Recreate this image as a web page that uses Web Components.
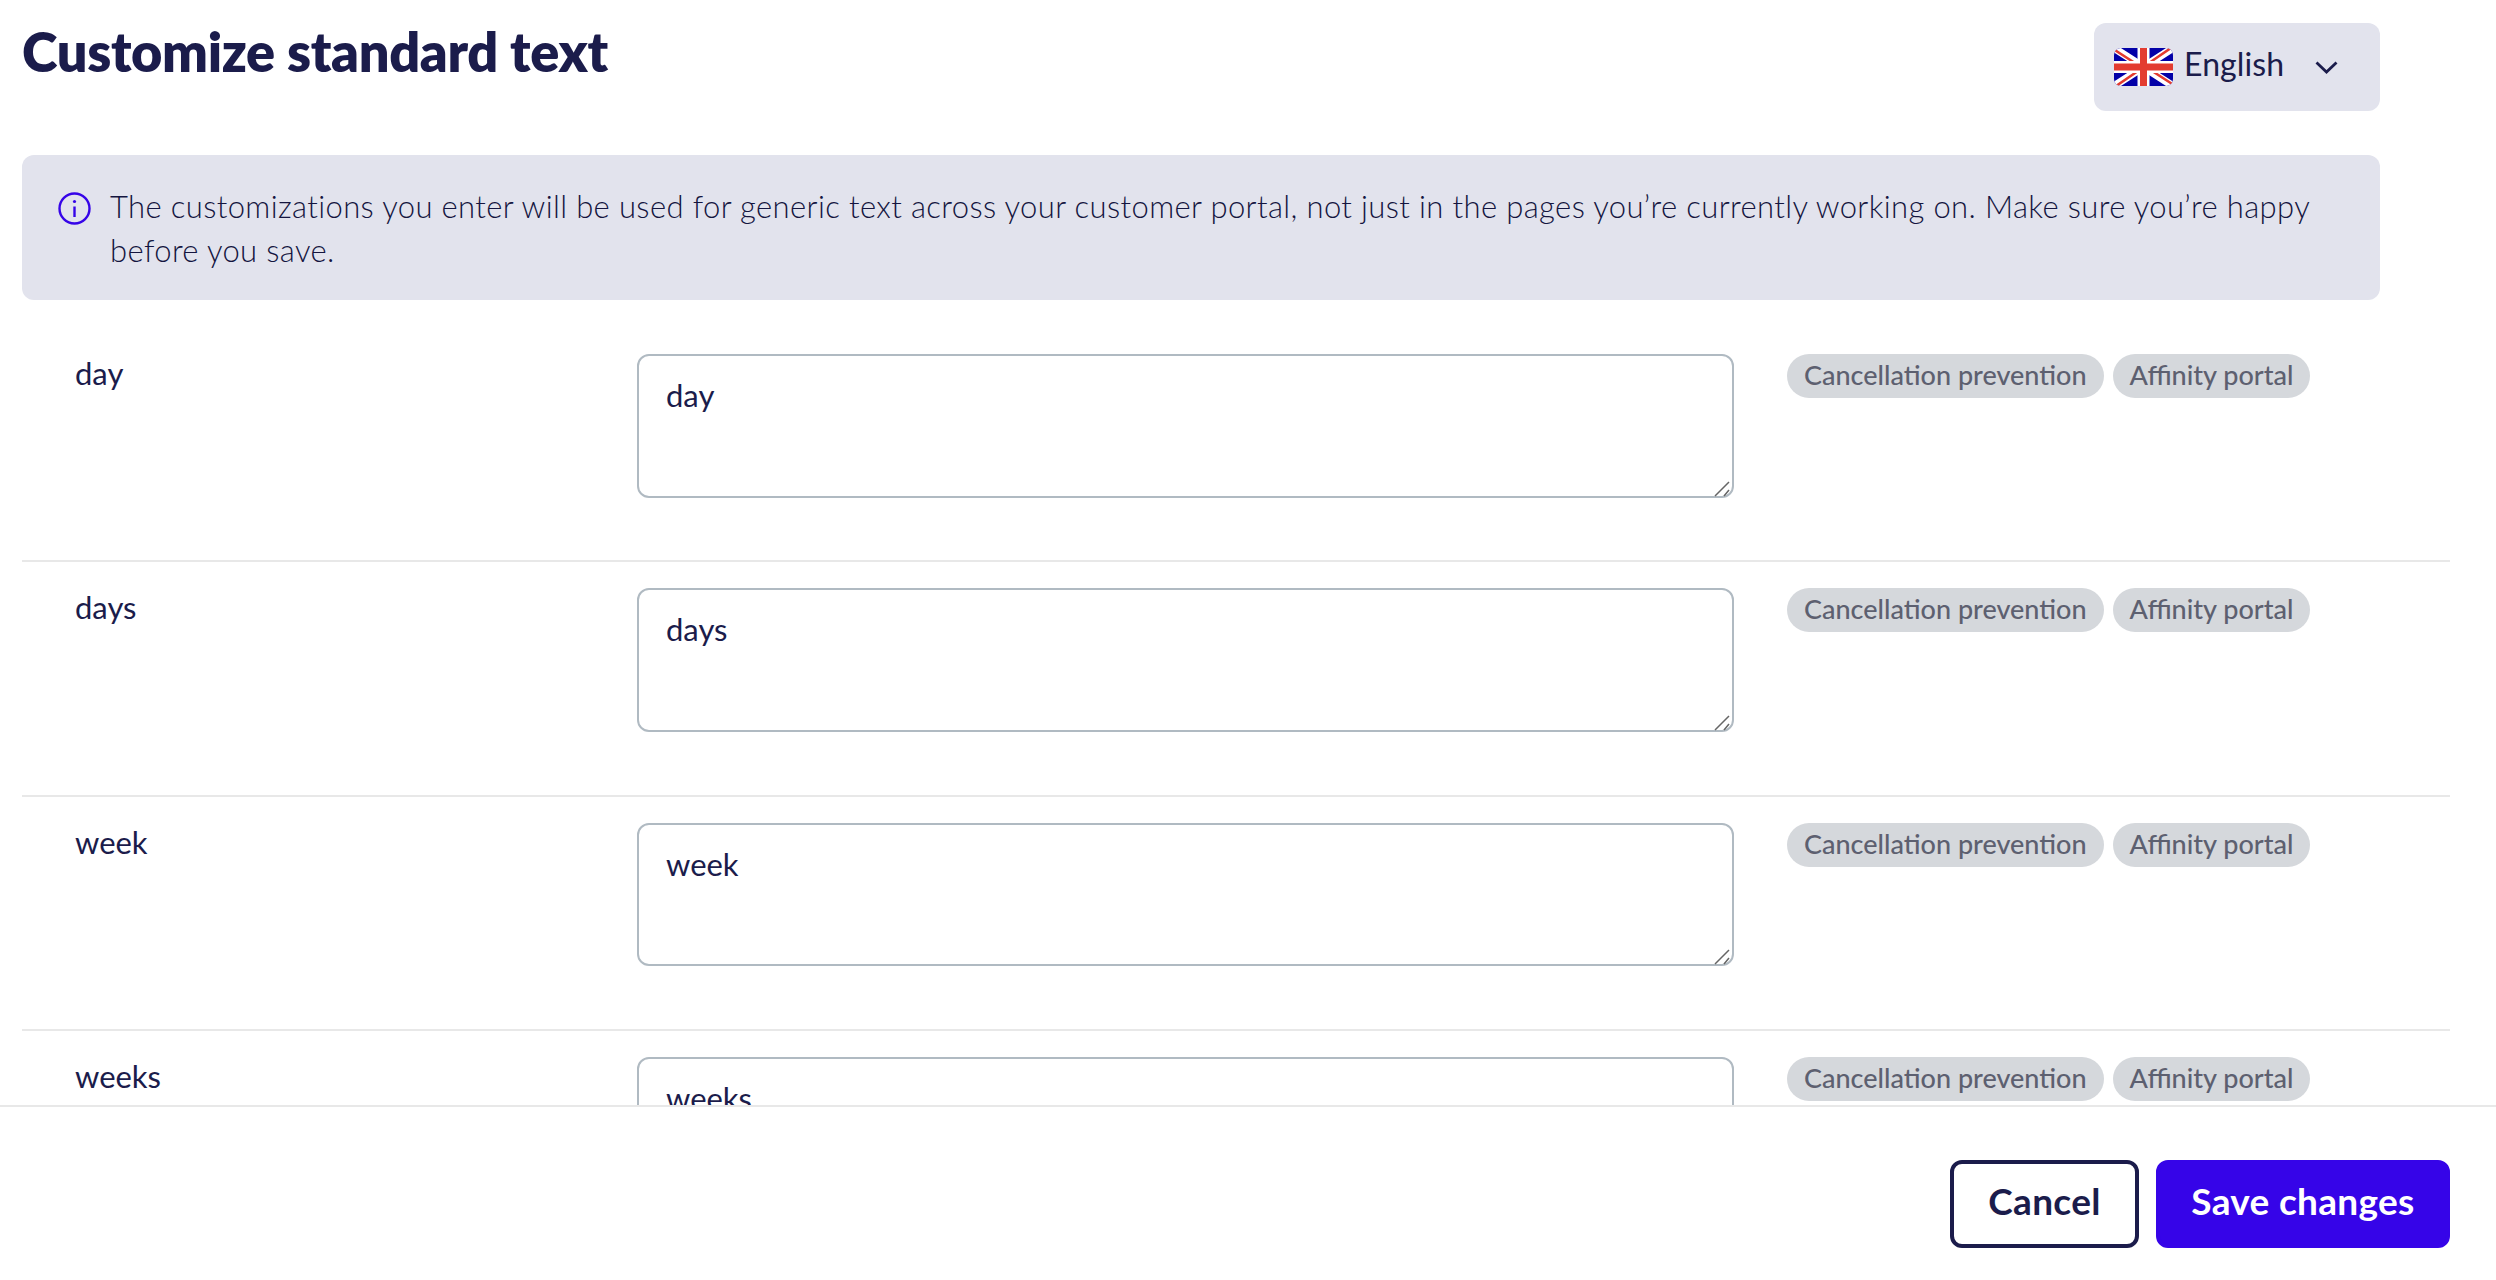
<!DOCTYPE html>
<html lang="en">
<head>
<meta charset="utf-8">
<title>Customize standard text</title>
<style>
  html, body { margin: 0; height: 100%; background: #fff; }
  body { font-family: Lato, "Noto Sans", sans-serif; color: #1b1c4b; }
</style>
</head>
<body>
<editor-page>
  <page-header slot="header" heading="Customize standard text"></page-header>
  <info-alert slot="alert">The customizations you enter will be used for generic text across your customer portal, not just in the pages you’re currently working on. Make sure you’re happy before you save.</info-alert>
  <text-row label="day"></text-row>
  <text-row label="days"></text-row>
  <text-row label="week"></text-row>
  <text-row label="weeks"></text-row>
  <footer-bar slot="footer"></footer-bar>
</editor-page>

<script>
class EditorPage extends HTMLElement {
  constructor() {
    super();
    this.attachShadow({ mode: "open" }).innerHTML = /*html*/ `
      <style>
        :host { display: flex; flex-direction: column; height: 1280px; overflow: hidden; }
        .scroll { flex: 1; min-height: 0; overflow: hidden; padding: 23px 46px 0 22px; }
      </style>
      <div class="scroll">
        <slot name="header"></slot>
        <slot name="alert"></slot>
        <slot></slot>
      </div>
      <slot name="footer"></slot>
    `;
  }
}

class PageHeader extends HTMLElement {
  constructor() {
    super();
    this.attachShadow({ mode: "open" }).innerHTML = /*html*/ `
      <style>
        :host { display: flex; justify-content: space-between; align-items: flex-start; margin-right: 70px; }
        h1 { margin: 0; font-size: 54px; line-height: 58px; font-weight: 800; letter-spacing: -0.34px; }
      </style>
      <h1></h1>
      <lang-select></lang-select>
    `;
    this.shadowRoot.querySelector("h1").textContent = this.getAttribute("heading");
  }
}

class LangSelect extends HTMLElement {
  constructor() {
    super();
    this.attachShadow({ mode: "open" }).innerHTML = /*html*/ `
      <style>
        :host { display: flex; align-items: center; box-sizing: border-box; width: 286px; height: 88px; padding: 0 42px 0 20px; background: #e2e3ed; border-radius: 12px; }
        svg { display: block; flex: none; }
        .flag { margin-right: 11px; }
        span { flex: 1; font-size: 32px; letter-spacing: 0.1px; font-weight: 400; position: relative; top: -4px; }
      </style>
      <svg class="flag" width="59" height="38" viewBox="0 0 59 38">
        <defs>
          <clipPath id="c"><rect width="59" height="38" rx="7"/></clipPath>
        </defs>
        <g clip-path="url(#c)">
          <rect width="59" height="38" fill="#0301a8"/>
          <path d="M0 0L59 38M59 0L0 38" stroke="#fff" stroke-width="7.5"/>
          <path d="M0 1.5L24 17M59 36.5L35 21M57 0L35 15M2 38L24 23" stroke="#e33c30" stroke-width="2.6"/>
          <path d="M29.5 0V38M0 19H59" stroke="#fff" stroke-width="12"/>
          <path d="M29.5 0V38M0 19H59" stroke="#e33c30" stroke-width="7"/>
        </g>
      </svg>
      <span>English</span>
      <svg width="23" height="13" viewBox="0 0 23 13" fill="none" stroke="#1b1c4b" stroke-width="2.8">
        <path d="M1.5 1.5L11.5 11L21.5 1.5"/>
      </svg>
    `;
  }
}

class InfoAlert extends HTMLElement {
  constructor() {
    super();
    this.attachShadow({ mode: "open" }).innerHTML = /*html*/ `
      <style>
        :host { display: flex; align-items: flex-start; box-sizing: border-box; height: 145px; margin: 44px 70px 28px 0; padding: 29px 40px 0 36px; background: #e2e3ed; border-radius: 12px; }
        svg { flex: none; margin: 8px 19px 0 0; }
        p { margin: 0; font-size: 31px; line-height: 44px; font-weight: 300; letter-spacing: 0.37px; color: #14153f; }
      </style>
      <svg width="33" height="33" viewBox="0 0 33 33" fill="none" stroke="#3604e8" stroke-width="2.4">
        <circle cx="16.5" cy="16.5" r="15"/>
        <path d="M16.5 14.5V25"/>
        <circle cx="16.5" cy="9.5" r="1.6" fill="#3604e8" stroke="none"/>
      </svg>
      <p><slot></slot></p>
    `;
  }
}

class TextRow extends HTMLElement {
  constructor() {
    super();
    this.attachShadow({ mode: "open" }).innerHTML = /*html*/ `
      <style>
        :host { display: grid; grid-template-columns: 563px 1096px 1fr; box-sizing: border-box; height: 234.4px; padding: 26px 0 0 53px; border-bottom: 2px solid #e8e8e8; }
        .label { font-size: 31px; line-height: 44px; font-weight: 400; margin-top: -3px; }
        .field { position: relative; height: 143.67px; margin-left: -1px; }
        textarea { display: block; box-sizing: border-box; width: 100%; height: 100%; padding: 17px 27px; margin: 0; background: #fff; border: 2px solid #b0bac2; border-radius: 12px; outline: none; resize: none; font: 400 31px/44px Lato, "Noto Sans", sans-serif; color: #1b1c4b; }
        .grip { position: absolute; right: 4px; bottom: 1px; }
        .tags { display: flex; align-items: flex-start; gap: 9px; margin-left: 53px; }
      </style>
      <div class="label"></div>
      <div class="field">
        <textarea spellcheck="false"></textarea>
        <svg class="grip" width="16" height="16" viewBox="0 0 16 16" fill="none" stroke="#666" stroke-width="1.5">
          <path d="M1 15L15 1M10 15L15 9"/>
        </svg>
      </div>
      <div class="tags">
        <tag-pill>Cancellation prevention</tag-pill>
        <tag-pill>Affinity portal</tag-pill>
      </div>
    `;
    const label = this.getAttribute("label");
    this.shadowRoot.querySelector(".label").textContent = label;
    this.shadowRoot.querySelector("textarea").textContent = label;
  }
}

class TagPill extends HTMLElement {
  constructor() {
    super();
    this.attachShadow({ mode: "open" }).innerHTML = /*html*/ `
      <style>
        :host { display: block; height: 44px; padding: 0 17px; background: #d5d8dc; border-radius: 22px; color: #5d6070; font-size: 27px; line-height: 42px; font-weight: 500; white-space: nowrap; }
      </style>
      <slot></slot>
    `;
  }
}

class FooterBar extends HTMLElement {
  constructor() {
    super();
    this.attachShadow({ mode: "open" }).innerHTML = /*html*/ `
      <style>
        :host { display: flex; flex: none; justify-content: flex-end; gap: 17px; box-sizing: border-box; height: 175px; padding: 53px 46px 0 0; background: #fff; border-top: 2px solid #e8e8e8; }
      </style>
      <app-button>Cancel</app-button>
      <app-button primary>Save changes</app-button>
    `;
  }
}

class AppButton extends HTMLElement {
  constructor() {
    super();
    this.attachShadow({ mode: "open" }).innerHTML = /*html*/ `
      <style>
        :host { display: flex; align-items: center; justify-content: center; box-sizing: border-box; width: 189px; height: 88px; padding-bottom: 7px; border: 4px solid #1b1c4b; border-radius: 12px; color: #1b1c4b; font-size: 37px; font-weight: 700; letter-spacing: 0.3px; }
        :host([primary]) { width: 294px; background: #3604e8; border-color: #3604e8; color: #fff; }
      </style>
      <slot></slot>
    `;
  }
}

customElements.define("editor-page", EditorPage);
customElements.define("page-header", PageHeader);
customElements.define("lang-select", LangSelect);
customElements.define("info-alert", InfoAlert);
customElements.define("text-row", TextRow);
customElements.define("tag-pill", TagPill);
customElements.define("footer-bar", FooterBar);
customElements.define("app-button", AppButton);
</script>
</body>
</html>
